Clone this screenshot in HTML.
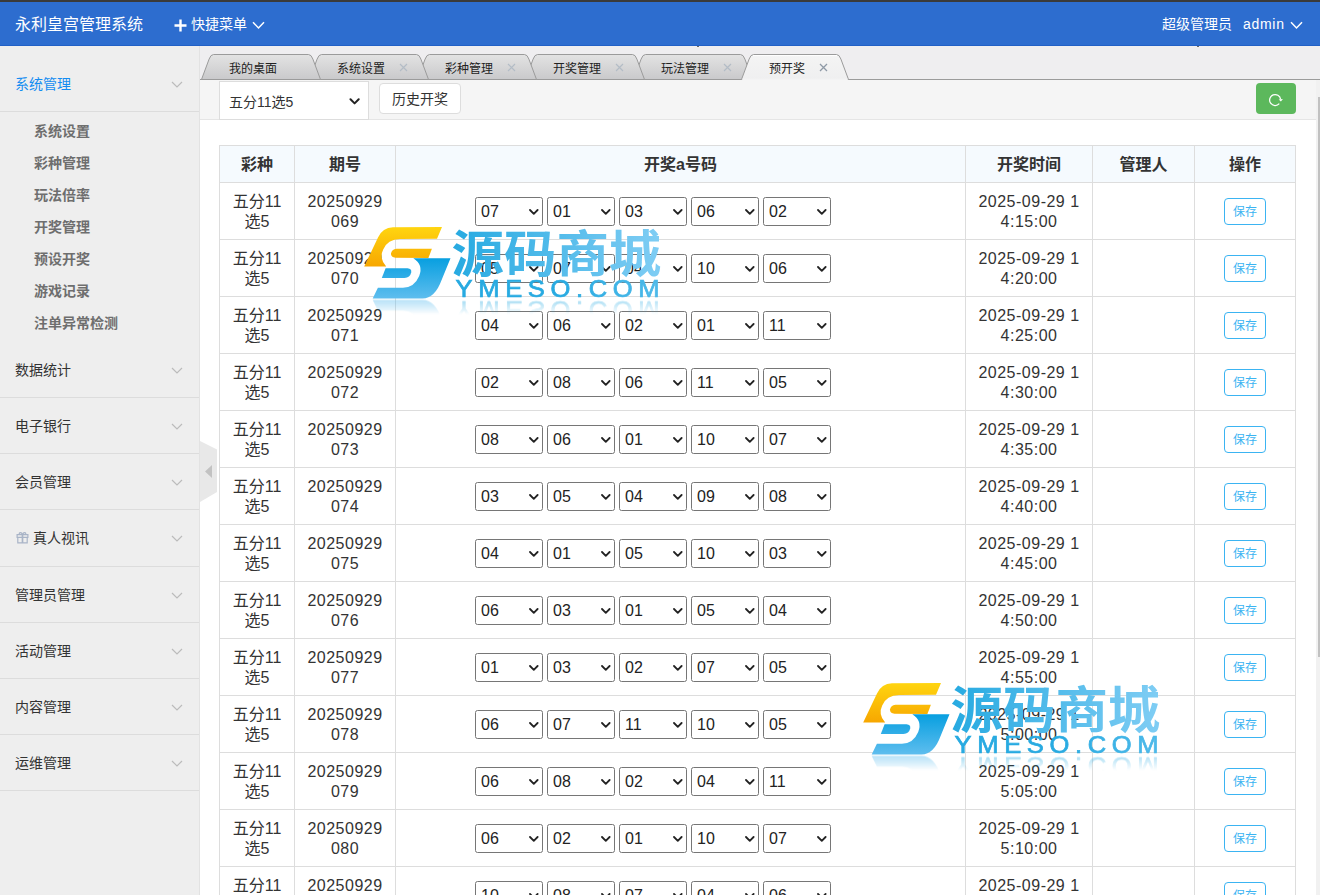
<!DOCTYPE html>
<html lang="zh-CN">
<head>
<meta charset="utf-8">
<title>永利皇宫管理系统</title>
<style>
html,body{margin:0;padding:0}
body{width:1320px;height:895px;overflow:hidden;position:relative;background:#fff;font-family:"Liberation Sans","Noto Sans CJK SC",sans-serif;font-size:14px;color:#333}
.abs{position:absolute}
#topline{left:0;top:0;width:1320px;height:2px;background:#3a3a3a}
#header{left:0;top:2px;width:1320px;height:43px;background:#2d6dcf;border-bottom:1px solid #2160c6;color:#fff}
#header .logo{left:15px;top:0;height:44px;line-height:45px;font-size:16px;white-space:nowrap}
#header .quick{left:191px;top:0;height:44px;line-height:45px;font-size:14px;white-space:nowrap}
#header .role{left:1162px;top:0;height:44px;line-height:45px;font-size:14px;white-space:nowrap}
#header .user{letter-spacing:.7px;left:1243px;top:0;height:44px;line-height:45px;font-size:14px;white-space:nowrap}
#side{left:0;top:46px;width:199px;height:849px;background:#eee;border-right:1px solid #e2e2e2}
.dt{position:absolute;left:0;width:199px;height:55px;border-bottom:1px solid #dcdcdc;line-height:57px;font-size:14px;color:#333}
.dt span.t{position:absolute;left:15px;top:0;white-space:nowrap}
.dt svg{position:absolute;left:171px;top:25px}
.dd{position:absolute;left:34px;font-size:14px;font-weight:bold;color:#6e6e6e;height:32px;line-height:32px;white-space:nowrap}
#tabbar{left:200px;top:46px;width:1120px;height:34px;background:#efeef0}
#tabsvg{left:0;top:46px}
.tabt{position:absolute;top:60px;height:18px;line-height:18px;font-size:12px;color:#222;white-space:nowrap}
.tabx{position:absolute;top:63px}
#toolbar{left:200px;top:80px;width:1116px;height:39px;background:#f5f5f5;border-bottom:1px solid #e5e5e5}
#gsel{left:219px;top:81px;width:148px;height:37px;border:1px solid #ddd;background:#fff;font-size:14px;line-height:40px;color:#333}
#gsel span{position:absolute;left:9px;top:0;white-space:nowrap}
#gsel svg{position:absolute;left:129px;top:16px}
#hist{left:379px;top:83px;width:80px;height:29px;border:1px solid #ddd;border-radius:4px;background:#fff;font-size:14px;line-height:31px;text-align:center;color:#333}
#refresh{left:1256px;top:83px;width:40px;height:31px;border-radius:4px;background:#5cb85c}
#refresh svg{position:absolute;left:11px;top:9px}
#vtrack{left:1316px;top:80px;width:4px;height:815px;background:#f1f1f1}
#vthumb{left:1318px;top:97px;width:2px;height:560px;background:#c1c1c1}
#handle{left:200px;top:441px}
table{position:absolute;left:219px;top:145px;border-collapse:collapse;table-layout:fixed;width:1077px;font-size:16px;line-height:20px;color:#333}
th,td{border:1px solid #ddd;padding:9px 0 7px;text-align:center;vertical-align:middle;overflow:hidden}
th{background:#f5fafe;font-weight:bold;height:20px}
td{height:40px}
td.n{letter-spacing:.5px}
.selwrap{position:relative;top:-.5px;width:356px;margin-left:79px;white-space:nowrap;font-size:0;text-align:left;height:29px}
.sel{display:inline-block;position:relative;box-sizing:border-box;width:68px;height:29px;border:1px solid #767676;border-radius:2.5px;background:#fff;margin-right:4px;font-size:16px;line-height:28.6px;padding-left:5px;text-align:left;vertical-align:top;color:#222}
.sel:last-child{margin-right:0}
.sel .cv{position:absolute;left:52.6px;top:11px}
.save{position:relative;top:-1px;display:inline-block;box-sizing:border-box;width:42px;height:27px;border:1px solid #3bb4f2;border-radius:4px;font-size:12px;line-height:27px;color:#3bb4f2;background:#fff;vertical-align:middle}
.wm{position:absolute;-webkit-box-reflect:below 0.4px linear-gradient(to bottom,rgba(255,255,255,0) 0,rgba(255,255,255,0) 81%,rgba(255,255,255,.45) 100%)}
</style>
</head>
<body>
<div id="topline" class="abs"></div>
<div id="header" class="abs">
  <div class="logo abs">永利皇宫管理系统</div>
  <svg class="abs" style="left:173.5px;top:16.6px" width="13" height="13" viewBox="0 0 13 13"><path d="M6.5 0.5V12.5M0.5 6.5H12.5" stroke="#fff" stroke-width="2.4" fill="none"/></svg>
  <div class="quick abs">快捷菜单</div>
  <svg class="abs" style="left:252px;top:19px" width="13" height="9" viewBox="0 0 13 9"><path d="M1 1.2L6.5 7L12 1.2" stroke="#fff" stroke-width="1.5" fill="none"/></svg>
  <div class="role abs">超级管理员</div>
  <div class="user abs">admin</div>
  <svg class="abs" style="left:1290px;top:19px" width="13" height="9" viewBox="0 0 13 9"><path d="M1 1.2L6.5 7L12 1.2" stroke="#fff" stroke-width="1.5" fill="none"/></svg>
</div>

<div id="side" class="abs">
  <div class="dt" style="top:10px;color:#148cf1"><span class="t">系统管理</span><svg width="12" height="8" viewBox="0 0 12 8"><path d="M1 1L6 6L11 1" stroke="#bbb" stroke-width="1.2" fill="none"/></svg></div>
  <div class="dd" style="top:69px">系统设置</div>
  <div class="dd" style="top:101px">彩种管理</div>
  <div class="dd" style="top:133px">玩法倍率</div>
  <div class="dd" style="top:165px">开奖管理</div>
  <div class="dd" style="top:197px">预设开奖</div>
  <div class="dd" style="top:229px">游戏记录</div>
  <div class="dd" style="top:261px">注单异常检测</div>
  <div class="dt" style="top:296px"><span class="t">数据统计</span><svg width="12" height="8" viewBox="0 0 12 8"><path d="M1 1L6 6L11 1" stroke="#bbb" stroke-width="1.2" fill="none"/></svg></div>
  <div class="dt" style="top:352px"><span class="t">电子银行</span><svg width="12" height="8" viewBox="0 0 12 8"><path d="M1 1L6 6L11 1" stroke="#bbb" stroke-width="1.2" fill="none"/></svg></div>
  <div class="dt" style="top:408px"><span class="t">会员管理</span><svg width="12" height="8" viewBox="0 0 12 8"><path d="M1 1L6 6L11 1" stroke="#bbb" stroke-width="1.2" fill="none"/></svg></div>
  <div class="dt" style="top:464px;height:56px"><span class="t" style="left:33px">真人视讯</span><svg style="left:15.5px;top:21.3px" width="13" height="13" viewBox="0 0 13 13"><path d="M6.5 3.6C5.6 0.8 2.6 1 3.4 3.6M6.5 3.6C7.4 0.8 10.4 1 9.6 3.6" stroke="#a9b4c7" stroke-width="1.2" fill="none"/><path d="M1.1 3.7H11.9V6.4H1.1Z" stroke="#a9b4c7" stroke-width="1.2" fill="none"/><path d="M1.8 6.4V11.9H11.2V6.4" stroke="#a9b4c7" stroke-width="1.2" fill="none"/><path d="M6.5 3.7V11.9" stroke="#a9b4c7" stroke-width="1.7" fill="none"/></svg><svg width="12" height="8" viewBox="0 0 12 8"><path d="M1 1L6 6L11 1" stroke="#bbb" stroke-width="1.2" fill="none"/></svg></div>
  <div class="dt" style="top:521px"><span class="t">管理员管理</span><svg width="12" height="8" viewBox="0 0 12 8"><path d="M1 1L6 6L11 1" stroke="#bbb" stroke-width="1.2" fill="none"/></svg></div>
  <div class="dt" style="top:577px"><span class="t">活动管理</span><svg width="12" height="8" viewBox="0 0 12 8"><path d="M1 1L6 6L11 1" stroke="#bbb" stroke-width="1.2" fill="none"/></svg></div>
  <div class="dt" style="top:633px"><span class="t">内容管理</span><svg width="12" height="8" viewBox="0 0 12 8"><path d="M1 1L6 6L11 1" stroke="#bbb" stroke-width="1.2" fill="none"/></svg></div>
  <div class="dt" style="top:689px"><span class="t">运维管理</span><svg width="12" height="8" viewBox="0 0 12 8"><path d="M1 1L6 6L11 1" stroke="#bbb" stroke-width="1.2" fill="none"/></svg></div>
</div>

<div id="tabbar" class="abs"></div>
<div class="abs" style="left:697px;top:46px;width:2px;height:1px;background:#666"></div>
<div class="abs" style="left:1197px;top:46px;width:2px;height:1px;background:#666"></div>
<div id="toolbar" class="abs"></div>
<svg id="tabsvg" class="abs" width="1320" height="34" viewBox="0 0 1320 34">
  <defs>
    <linearGradient id="tg" x1="0" y1="0" x2="0" y2="1"><stop offset="0" stop-color="#e3e3e3"/><stop offset="1" stop-color="#c9c9cb"/></linearGradient>
    <linearGradient id="ta" x1="0" y1="0" x2="0" y2="1"><stop offset="0" stop-color="#f4f4f4"/><stop offset="1" stop-color="#efeff0"/></linearGradient>
  </defs>
  <path d="M200 33.5H1320" stroke="#9b9b9b" stroke-width="1" fill="none"/>
<path d="M633.5 33.5 L641.1 13.1 Q642.7 8.5 645.5 8.5 L740.5 8.5 Q743.3 8.5 744.9 13.1 L752.5 33.5 Z" fill="url(#tg)" stroke="#9b9b9b" stroke-width="1"/>
<path d="M525.5 33.5 L533.1 13.1 Q534.7 8.5 537.5 8.5 L632.5 8.5 Q635.3 8.5 636.9 13.1 L644.5 33.5 Z" fill="url(#tg)" stroke="#9b9b9b" stroke-width="1"/>
<path d="M417.5 33.5 L425.1 13.1 Q426.7 8.5 429.5 8.5 L524.5 8.5 Q527.3 8.5 528.9 13.1 L536.5 33.5 Z" fill="url(#tg)" stroke="#9b9b9b" stroke-width="1"/>
<path d="M309.5 33.5 L317.1 13.1 Q318.7 8.5 321.5 8.5 L416.5 8.5 Q419.3 8.5 420.9 13.1 L428.5 33.5 Z" fill="url(#tg)" stroke="#9b9b9b" stroke-width="1"/>
<path d="M201.5 33.5 L209.1 13.1 Q210.7 8.5 213.5 8.5 L308.5 8.5 Q311.3 8.5 312.9 13.1 L320.5 33.5 Z" fill="url(#tg)" stroke="#9b9b9b" stroke-width="1"/>
<path d="M741.5 33.5 L749.1 13.1 Q750.7 8.5 753.5 8.5 L836.5 8.5 Q839.3 8.5 840.9 13.1 L848.5 33.5" fill="url(#ta)" stroke="#9b9b9b" stroke-width="1"/>
  <path d="M742.3 33.5H847.7" stroke="#f3f3f4" stroke-width="1.4" fill="none"/>
  <path d="M753 9.6H837" stroke="#fff" stroke-width="1" fill="none"/>
</svg>
<div class="tabt" style="left:229px">我的桌面</div>
<div class="tabt" style="left:337px">系统设置</div>
<div class="tabt" style="left:445px">彩种管理</div>
<div class="tabt" style="left:553px">开奖管理</div>
<div class="tabt" style="left:661px">玩法管理</div>
<div class="tabt" style="left:769px">预开奖</div>
<svg class="tabx" style="left:399px" width="9" height="9" viewBox="0 0 9 9"><path d="M1 1L8 8M8 1L1 8" stroke="#b3bcc6" stroke-width="1.2"/></svg>
<svg class="tabx" style="left:507px" width="9" height="9" viewBox="0 0 9 9"><path d="M1 1L8 8M8 1L1 8" stroke="#b3bcc6" stroke-width="1.2"/></svg>
<svg class="tabx" style="left:615px" width="9" height="9" viewBox="0 0 9 9"><path d="M1 1L8 8M8 1L1 8" stroke="#b3bcc6" stroke-width="1.2"/></svg>
<svg class="tabx" style="left:723px" width="9" height="9" viewBox="0 0 9 9"><path d="M1 1L8 8M8 1L1 8" stroke="#b3bcc6" stroke-width="1.2"/></svg>
<svg class="tabx" style="left:819px" width="9" height="9" viewBox="0 0 9 9"><path d="M1 1L8 8M8 1L1 8" stroke="#8e99a6" stroke-width="1.3"/></svg>

<div id="gsel" class="abs"><span>五分11选5</span><svg width="12" height="8" viewBox="0 0 12 8"><path d="M1.5 1.3L5.6 5.4L9.7 1.3" fill="none" stroke="#222" stroke-width="2" stroke-linecap="round" stroke-linejoin="round"/></svg></div>
<div id="hist" class="abs">历史开奖</div>
<div id="refresh" class="abs"><svg width="16" height="16" viewBox="0 0 16 16"><path d="M12.29 11.68A5.5 5.5 0 1 1 13.6 7.3" fill="none" stroke="#fff" stroke-width="1.25"/><path d="M11.7 7.4L15.9 6.9L13.9 9.6Z" fill="#fff"/></svg></div>

<table>
<colgroup><col style="width:75px"><col style="width:101px"><col style="width:570px"><col style="width:127px"><col style="width:102px"><col style="width:101px"></colgroup>
<thead><tr><th>彩种</th><th>期号</th><th>开奖a号码</th><th>开奖时间</th><th>管理人</th><th>操作</th></tr></thead>
<tbody>
<tr><td>五分11<br>选5</td><td class="n">20250929<br>069</td><td class="nums"><div class="selwrap"><span class="sel">07<svg class="cv" width="10" height="6" viewBox="0 0 10 6"><path d="M1 1 L4.8 4.8 L8.6 1" fill="none" stroke="#222" stroke-width="1.8" stroke-linecap="round" stroke-linejoin="round"/></svg></span><span class="sel">01<svg class="cv" width="10" height="6" viewBox="0 0 10 6"><path d="M1 1 L4.8 4.8 L8.6 1" fill="none" stroke="#222" stroke-width="1.8" stroke-linecap="round" stroke-linejoin="round"/></svg></span><span class="sel">03<svg class="cv" width="10" height="6" viewBox="0 0 10 6"><path d="M1 1 L4.8 4.8 L8.6 1" fill="none" stroke="#222" stroke-width="1.8" stroke-linecap="round" stroke-linejoin="round"/></svg></span><span class="sel">06<svg class="cv" width="10" height="6" viewBox="0 0 10 6"><path d="M1 1 L4.8 4.8 L8.6 1" fill="none" stroke="#222" stroke-width="1.8" stroke-linecap="round" stroke-linejoin="round"/></svg></span><span class="sel">02<svg class="cv" width="10" height="6" viewBox="0 0 10 6"><path d="M1 1 L4.8 4.8 L8.6 1" fill="none" stroke="#222" stroke-width="1.8" stroke-linecap="round" stroke-linejoin="round"/></svg></span></div></td><td class="n">2025-09-29 1<br>4:15:00</td><td></td><td><span class="save">保存</span></td></tr>
<tr><td>五分11<br>选5</td><td class="n">20250929<br>070</td><td class="nums"><div class="selwrap"><span class="sel">05<svg class="cv" width="10" height="6" viewBox="0 0 10 6"><path d="M1 1 L4.8 4.8 L8.6 1" fill="none" stroke="#222" stroke-width="1.8" stroke-linecap="round" stroke-linejoin="round"/></svg></span><span class="sel">07<svg class="cv" width="10" height="6" viewBox="0 0 10 6"><path d="M1 1 L4.8 4.8 L8.6 1" fill="none" stroke="#222" stroke-width="1.8" stroke-linecap="round" stroke-linejoin="round"/></svg></span><span class="sel">04<svg class="cv" width="10" height="6" viewBox="0 0 10 6"><path d="M1 1 L4.8 4.8 L8.6 1" fill="none" stroke="#222" stroke-width="1.8" stroke-linecap="round" stroke-linejoin="round"/></svg></span><span class="sel">10<svg class="cv" width="10" height="6" viewBox="0 0 10 6"><path d="M1 1 L4.8 4.8 L8.6 1" fill="none" stroke="#222" stroke-width="1.8" stroke-linecap="round" stroke-linejoin="round"/></svg></span><span class="sel">06<svg class="cv" width="10" height="6" viewBox="0 0 10 6"><path d="M1 1 L4.8 4.8 L8.6 1" fill="none" stroke="#222" stroke-width="1.8" stroke-linecap="round" stroke-linejoin="round"/></svg></span></div></td><td class="n">2025-09-29 1<br>4:20:00</td><td></td><td><span class="save">保存</span></td></tr>
<tr><td>五分11<br>选5</td><td class="n">20250929<br>071</td><td class="nums"><div class="selwrap"><span class="sel">04<svg class="cv" width="10" height="6" viewBox="0 0 10 6"><path d="M1 1 L4.8 4.8 L8.6 1" fill="none" stroke="#222" stroke-width="1.8" stroke-linecap="round" stroke-linejoin="round"/></svg></span><span class="sel">06<svg class="cv" width="10" height="6" viewBox="0 0 10 6"><path d="M1 1 L4.8 4.8 L8.6 1" fill="none" stroke="#222" stroke-width="1.8" stroke-linecap="round" stroke-linejoin="round"/></svg></span><span class="sel">02<svg class="cv" width="10" height="6" viewBox="0 0 10 6"><path d="M1 1 L4.8 4.8 L8.6 1" fill="none" stroke="#222" stroke-width="1.8" stroke-linecap="round" stroke-linejoin="round"/></svg></span><span class="sel">01<svg class="cv" width="10" height="6" viewBox="0 0 10 6"><path d="M1 1 L4.8 4.8 L8.6 1" fill="none" stroke="#222" stroke-width="1.8" stroke-linecap="round" stroke-linejoin="round"/></svg></span><span class="sel">11<svg class="cv" width="10" height="6" viewBox="0 0 10 6"><path d="M1 1 L4.8 4.8 L8.6 1" fill="none" stroke="#222" stroke-width="1.8" stroke-linecap="round" stroke-linejoin="round"/></svg></span></div></td><td class="n">2025-09-29 1<br>4:25:00</td><td></td><td><span class="save">保存</span></td></tr>
<tr><td>五分11<br>选5</td><td class="n">20250929<br>072</td><td class="nums"><div class="selwrap"><span class="sel">02<svg class="cv" width="10" height="6" viewBox="0 0 10 6"><path d="M1 1 L4.8 4.8 L8.6 1" fill="none" stroke="#222" stroke-width="1.8" stroke-linecap="round" stroke-linejoin="round"/></svg></span><span class="sel">08<svg class="cv" width="10" height="6" viewBox="0 0 10 6"><path d="M1 1 L4.8 4.8 L8.6 1" fill="none" stroke="#222" stroke-width="1.8" stroke-linecap="round" stroke-linejoin="round"/></svg></span><span class="sel">06<svg class="cv" width="10" height="6" viewBox="0 0 10 6"><path d="M1 1 L4.8 4.8 L8.6 1" fill="none" stroke="#222" stroke-width="1.8" stroke-linecap="round" stroke-linejoin="round"/></svg></span><span class="sel">11<svg class="cv" width="10" height="6" viewBox="0 0 10 6"><path d="M1 1 L4.8 4.8 L8.6 1" fill="none" stroke="#222" stroke-width="1.8" stroke-linecap="round" stroke-linejoin="round"/></svg></span><span class="sel">05<svg class="cv" width="10" height="6" viewBox="0 0 10 6"><path d="M1 1 L4.8 4.8 L8.6 1" fill="none" stroke="#222" stroke-width="1.8" stroke-linecap="round" stroke-linejoin="round"/></svg></span></div></td><td class="n">2025-09-29 1<br>4:30:00</td><td></td><td><span class="save">保存</span></td></tr>
<tr><td>五分11<br>选5</td><td class="n">20250929<br>073</td><td class="nums"><div class="selwrap"><span class="sel">08<svg class="cv" width="10" height="6" viewBox="0 0 10 6"><path d="M1 1 L4.8 4.8 L8.6 1" fill="none" stroke="#222" stroke-width="1.8" stroke-linecap="round" stroke-linejoin="round"/></svg></span><span class="sel">06<svg class="cv" width="10" height="6" viewBox="0 0 10 6"><path d="M1 1 L4.8 4.8 L8.6 1" fill="none" stroke="#222" stroke-width="1.8" stroke-linecap="round" stroke-linejoin="round"/></svg></span><span class="sel">01<svg class="cv" width="10" height="6" viewBox="0 0 10 6"><path d="M1 1 L4.8 4.8 L8.6 1" fill="none" stroke="#222" stroke-width="1.8" stroke-linecap="round" stroke-linejoin="round"/></svg></span><span class="sel">10<svg class="cv" width="10" height="6" viewBox="0 0 10 6"><path d="M1 1 L4.8 4.8 L8.6 1" fill="none" stroke="#222" stroke-width="1.8" stroke-linecap="round" stroke-linejoin="round"/></svg></span><span class="sel">07<svg class="cv" width="10" height="6" viewBox="0 0 10 6"><path d="M1 1 L4.8 4.8 L8.6 1" fill="none" stroke="#222" stroke-width="1.8" stroke-linecap="round" stroke-linejoin="round"/></svg></span></div></td><td class="n">2025-09-29 1<br>4:35:00</td><td></td><td><span class="save">保存</span></td></tr>
<tr><td>五分11<br>选5</td><td class="n">20250929<br>074</td><td class="nums"><div class="selwrap"><span class="sel">03<svg class="cv" width="10" height="6" viewBox="0 0 10 6"><path d="M1 1 L4.8 4.8 L8.6 1" fill="none" stroke="#222" stroke-width="1.8" stroke-linecap="round" stroke-linejoin="round"/></svg></span><span class="sel">05<svg class="cv" width="10" height="6" viewBox="0 0 10 6"><path d="M1 1 L4.8 4.8 L8.6 1" fill="none" stroke="#222" stroke-width="1.8" stroke-linecap="round" stroke-linejoin="round"/></svg></span><span class="sel">04<svg class="cv" width="10" height="6" viewBox="0 0 10 6"><path d="M1 1 L4.8 4.8 L8.6 1" fill="none" stroke="#222" stroke-width="1.8" stroke-linecap="round" stroke-linejoin="round"/></svg></span><span class="sel">09<svg class="cv" width="10" height="6" viewBox="0 0 10 6"><path d="M1 1 L4.8 4.8 L8.6 1" fill="none" stroke="#222" stroke-width="1.8" stroke-linecap="round" stroke-linejoin="round"/></svg></span><span class="sel">08<svg class="cv" width="10" height="6" viewBox="0 0 10 6"><path d="M1 1 L4.8 4.8 L8.6 1" fill="none" stroke="#222" stroke-width="1.8" stroke-linecap="round" stroke-linejoin="round"/></svg></span></div></td><td class="n">2025-09-29 1<br>4:40:00</td><td></td><td><span class="save">保存</span></td></tr>
<tr><td>五分11<br>选5</td><td class="n">20250929<br>075</td><td class="nums"><div class="selwrap"><span class="sel">04<svg class="cv" width="10" height="6" viewBox="0 0 10 6"><path d="M1 1 L4.8 4.8 L8.6 1" fill="none" stroke="#222" stroke-width="1.8" stroke-linecap="round" stroke-linejoin="round"/></svg></span><span class="sel">01<svg class="cv" width="10" height="6" viewBox="0 0 10 6"><path d="M1 1 L4.8 4.8 L8.6 1" fill="none" stroke="#222" stroke-width="1.8" stroke-linecap="round" stroke-linejoin="round"/></svg></span><span class="sel">05<svg class="cv" width="10" height="6" viewBox="0 0 10 6"><path d="M1 1 L4.8 4.8 L8.6 1" fill="none" stroke="#222" stroke-width="1.8" stroke-linecap="round" stroke-linejoin="round"/></svg></span><span class="sel">10<svg class="cv" width="10" height="6" viewBox="0 0 10 6"><path d="M1 1 L4.8 4.8 L8.6 1" fill="none" stroke="#222" stroke-width="1.8" stroke-linecap="round" stroke-linejoin="round"/></svg></span><span class="sel">03<svg class="cv" width="10" height="6" viewBox="0 0 10 6"><path d="M1 1 L4.8 4.8 L8.6 1" fill="none" stroke="#222" stroke-width="1.8" stroke-linecap="round" stroke-linejoin="round"/></svg></span></div></td><td class="n">2025-09-29 1<br>4:45:00</td><td></td><td><span class="save">保存</span></td></tr>
<tr><td>五分11<br>选5</td><td class="n">20250929<br>076</td><td class="nums"><div class="selwrap"><span class="sel">06<svg class="cv" width="10" height="6" viewBox="0 0 10 6"><path d="M1 1 L4.8 4.8 L8.6 1" fill="none" stroke="#222" stroke-width="1.8" stroke-linecap="round" stroke-linejoin="round"/></svg></span><span class="sel">03<svg class="cv" width="10" height="6" viewBox="0 0 10 6"><path d="M1 1 L4.8 4.8 L8.6 1" fill="none" stroke="#222" stroke-width="1.8" stroke-linecap="round" stroke-linejoin="round"/></svg></span><span class="sel">01<svg class="cv" width="10" height="6" viewBox="0 0 10 6"><path d="M1 1 L4.8 4.8 L8.6 1" fill="none" stroke="#222" stroke-width="1.8" stroke-linecap="round" stroke-linejoin="round"/></svg></span><span class="sel">05<svg class="cv" width="10" height="6" viewBox="0 0 10 6"><path d="M1 1 L4.8 4.8 L8.6 1" fill="none" stroke="#222" stroke-width="1.8" stroke-linecap="round" stroke-linejoin="round"/></svg></span><span class="sel">04<svg class="cv" width="10" height="6" viewBox="0 0 10 6"><path d="M1 1 L4.8 4.8 L8.6 1" fill="none" stroke="#222" stroke-width="1.8" stroke-linecap="round" stroke-linejoin="round"/></svg></span></div></td><td class="n">2025-09-29 1<br>4:50:00</td><td></td><td><span class="save">保存</span></td></tr>
<tr><td>五分11<br>选5</td><td class="n">20250929<br>077</td><td class="nums"><div class="selwrap"><span class="sel">01<svg class="cv" width="10" height="6" viewBox="0 0 10 6"><path d="M1 1 L4.8 4.8 L8.6 1" fill="none" stroke="#222" stroke-width="1.8" stroke-linecap="round" stroke-linejoin="round"/></svg></span><span class="sel">03<svg class="cv" width="10" height="6" viewBox="0 0 10 6"><path d="M1 1 L4.8 4.8 L8.6 1" fill="none" stroke="#222" stroke-width="1.8" stroke-linecap="round" stroke-linejoin="round"/></svg></span><span class="sel">02<svg class="cv" width="10" height="6" viewBox="0 0 10 6"><path d="M1 1 L4.8 4.8 L8.6 1" fill="none" stroke="#222" stroke-width="1.8" stroke-linecap="round" stroke-linejoin="round"/></svg></span><span class="sel">07<svg class="cv" width="10" height="6" viewBox="0 0 10 6"><path d="M1 1 L4.8 4.8 L8.6 1" fill="none" stroke="#222" stroke-width="1.8" stroke-linecap="round" stroke-linejoin="round"/></svg></span><span class="sel">05<svg class="cv" width="10" height="6" viewBox="0 0 10 6"><path d="M1 1 L4.8 4.8 L8.6 1" fill="none" stroke="#222" stroke-width="1.8" stroke-linecap="round" stroke-linejoin="round"/></svg></span></div></td><td class="n">2025-09-29 1<br>4:55:00</td><td></td><td><span class="save">保存</span></td></tr>
<tr><td>五分11<br>选5</td><td class="n">20250929<br>078</td><td class="nums"><div class="selwrap"><span class="sel">06<svg class="cv" width="10" height="6" viewBox="0 0 10 6"><path d="M1 1 L4.8 4.8 L8.6 1" fill="none" stroke="#222" stroke-width="1.8" stroke-linecap="round" stroke-linejoin="round"/></svg></span><span class="sel">07<svg class="cv" width="10" height="6" viewBox="0 0 10 6"><path d="M1 1 L4.8 4.8 L8.6 1" fill="none" stroke="#222" stroke-width="1.8" stroke-linecap="round" stroke-linejoin="round"/></svg></span><span class="sel">11<svg class="cv" width="10" height="6" viewBox="0 0 10 6"><path d="M1 1 L4.8 4.8 L8.6 1" fill="none" stroke="#222" stroke-width="1.8" stroke-linecap="round" stroke-linejoin="round"/></svg></span><span class="sel">10<svg class="cv" width="10" height="6" viewBox="0 0 10 6"><path d="M1 1 L4.8 4.8 L8.6 1" fill="none" stroke="#222" stroke-width="1.8" stroke-linecap="round" stroke-linejoin="round"/></svg></span><span class="sel">05<svg class="cv" width="10" height="6" viewBox="0 0 10 6"><path d="M1 1 L4.8 4.8 L8.6 1" fill="none" stroke="#222" stroke-width="1.8" stroke-linecap="round" stroke-linejoin="round"/></svg></span></div></td><td class="n">2025-09-29 1<br>5:00:00</td><td></td><td><span class="save">保存</span></td></tr>
<tr><td>五分11<br>选5</td><td class="n">20250929<br>079</td><td class="nums"><div class="selwrap"><span class="sel">06<svg class="cv" width="10" height="6" viewBox="0 0 10 6"><path d="M1 1 L4.8 4.8 L8.6 1" fill="none" stroke="#222" stroke-width="1.8" stroke-linecap="round" stroke-linejoin="round"/></svg></span><span class="sel">08<svg class="cv" width="10" height="6" viewBox="0 0 10 6"><path d="M1 1 L4.8 4.8 L8.6 1" fill="none" stroke="#222" stroke-width="1.8" stroke-linecap="round" stroke-linejoin="round"/></svg></span><span class="sel">02<svg class="cv" width="10" height="6" viewBox="0 0 10 6"><path d="M1 1 L4.8 4.8 L8.6 1" fill="none" stroke="#222" stroke-width="1.8" stroke-linecap="round" stroke-linejoin="round"/></svg></span><span class="sel">04<svg class="cv" width="10" height="6" viewBox="0 0 10 6"><path d="M1 1 L4.8 4.8 L8.6 1" fill="none" stroke="#222" stroke-width="1.8" stroke-linecap="round" stroke-linejoin="round"/></svg></span><span class="sel">11<svg class="cv" width="10" height="6" viewBox="0 0 10 6"><path d="M1 1 L4.8 4.8 L8.6 1" fill="none" stroke="#222" stroke-width="1.8" stroke-linecap="round" stroke-linejoin="round"/></svg></span></div></td><td class="n">2025-09-29 1<br>5:05:00</td><td></td><td><span class="save">保存</span></td></tr>
<tr><td>五分11<br>选5</td><td class="n">20250929<br>080</td><td class="nums"><div class="selwrap"><span class="sel">06<svg class="cv" width="10" height="6" viewBox="0 0 10 6"><path d="M1 1 L4.8 4.8 L8.6 1" fill="none" stroke="#222" stroke-width="1.8" stroke-linecap="round" stroke-linejoin="round"/></svg></span><span class="sel">02<svg class="cv" width="10" height="6" viewBox="0 0 10 6"><path d="M1 1 L4.8 4.8 L8.6 1" fill="none" stroke="#222" stroke-width="1.8" stroke-linecap="round" stroke-linejoin="round"/></svg></span><span class="sel">01<svg class="cv" width="10" height="6" viewBox="0 0 10 6"><path d="M1 1 L4.8 4.8 L8.6 1" fill="none" stroke="#222" stroke-width="1.8" stroke-linecap="round" stroke-linejoin="round"/></svg></span><span class="sel">10<svg class="cv" width="10" height="6" viewBox="0 0 10 6"><path d="M1 1 L4.8 4.8 L8.6 1" fill="none" stroke="#222" stroke-width="1.8" stroke-linecap="round" stroke-linejoin="round"/></svg></span><span class="sel">07<svg class="cv" width="10" height="6" viewBox="0 0 10 6"><path d="M1 1 L4.8 4.8 L8.6 1" fill="none" stroke="#222" stroke-width="1.8" stroke-linecap="round" stroke-linejoin="round"/></svg></span></div></td><td class="n">2025-09-29 1<br>5:10:00</td><td></td><td><span class="save">保存</span></td></tr>
<tr><td>五分11<br>选5</td><td class="n">20250929<br>081</td><td class="nums"><div class="selwrap"><span class="sel">10<svg class="cv" width="10" height="6" viewBox="0 0 10 6"><path d="M1 1 L4.8 4.8 L8.6 1" fill="none" stroke="#222" stroke-width="1.8" stroke-linecap="round" stroke-linejoin="round"/></svg></span><span class="sel">08<svg class="cv" width="10" height="6" viewBox="0 0 10 6"><path d="M1 1 L4.8 4.8 L8.6 1" fill="none" stroke="#222" stroke-width="1.8" stroke-linecap="round" stroke-linejoin="round"/></svg></span><span class="sel">07<svg class="cv" width="10" height="6" viewBox="0 0 10 6"><path d="M1 1 L4.8 4.8 L8.6 1" fill="none" stroke="#222" stroke-width="1.8" stroke-linecap="round" stroke-linejoin="round"/></svg></span><span class="sel">04<svg class="cv" width="10" height="6" viewBox="0 0 10 6"><path d="M1 1 L4.8 4.8 L8.6 1" fill="none" stroke="#222" stroke-width="1.8" stroke-linecap="round" stroke-linejoin="round"/></svg></span><span class="sel">06<svg class="cv" width="10" height="6" viewBox="0 0 10 6"><path d="M1 1 L4.8 4.8 L8.6 1" fill="none" stroke="#222" stroke-width="1.8" stroke-linecap="round" stroke-linejoin="round"/></svg></span></div></td><td class="n">2025-09-29 1<br>5:15:00</td><td></td><td><span class="save">保存</span></td></tr>

</tbody>
</table>

<svg id="handle" class="abs" width="18" height="62" viewBox="0 0 18 62"><path d="M0 0L17 8.5V51L0 61Z" fill="#e8e8e8"/><path d="M12 24V37L5 30.5Z" fill="#c2c2c2"/></svg>
<div id="vtrack" class="abs"></div>
<div id="vthumb" class="abs"></div>

<svg class="wm" style="left:360px;top:220px" width="310" height="79" viewBox="0 0 310 79">
  <defs>
    <linearGradient id="ay" gradientUnits="userSpaceOnUse" x1="0" y1="5" x2="0" y2="45"><stop offset="0" stop-color="#ffd510"/><stop offset="1" stop-color="#f7a600"/></linearGradient>
    <linearGradient id="ab" gradientUnits="userSpaceOnUse" x1="0" y1="36" x2="0" y2="76"><stop offset="0" stop-color="#079fe0"/><stop offset="1" stop-color="#5dbdee"/></linearGradient>
    <linearGradient id="at" gradientUnits="userSpaceOnUse" x1="93" y1="0" x2="300" y2="0"><stop offset="0" stop-color="#27aae1"/><stop offset="1" stop-color="#7fcdf4"/></linearGradient>
  </defs>
  <g transform="translate(5,2)">
    <path d="M77 5L28 5.3Q17.5 5.6 13 15.5L-0.8 44.6L21.2 44.6Q13.8 36.5 18.2 27.5Q22.5 17.2 35 17L72 16.7Z" fill="url(#ay)"/>
    <path d="M66.9 26.7L31.5 26.7Q26.6 27.2 26 31.6Q25.9 35.6 30.5 35.8L63.4 36.1Z" fill="url(#ay)"/>
    <path d="M48.3 36.2L85.5 36.2L76.6 58Q70 76.2 57.5 76.6L7.7 76.6L12.9 65.8L38 65.8Q49.5 65.4 54.2 54Q58.6 42.5 48.3 36.2Z" fill="url(#ab)"/>
    <path d="M20.6 46.3L42.5 46.3Q47 46.6 46.2 50.6Q45 55.7 39.5 56L16.8 56Z" fill="url(#ab)"/>
  </g>
  <text x="91.6" y="51.6" font-family="'Liberation Sans','Noto Sans CJK SC',sans-serif" font-weight="700" font-size="49.6" textLength="209.6" lengthAdjust="spacingAndGlyphs" fill="url(#at)">源码商城</text>
  <text transform="translate(95.6,77.2) scale(1.1,1)" x="0" y="0" font-family="'Liberation Sans',sans-serif" font-size="23.2" textLength="185.4" lengthAdjust="spacing" fill="url(#at)" stroke="url(#at)" stroke-width="0.7">YMESO.COM</text>
</svg>
<svg class="wm" style="left:859px;top:676px" width="310" height="79" viewBox="0 0 310 79">
  <defs>
    <linearGradient id="by" gradientUnits="userSpaceOnUse" x1="0" y1="5" x2="0" y2="45"><stop offset="0" stop-color="#ffd510"/><stop offset="1" stop-color="#f7a600"/></linearGradient>
    <linearGradient id="bb" gradientUnits="userSpaceOnUse" x1="0" y1="36" x2="0" y2="76"><stop offset="0" stop-color="#079fe0"/><stop offset="1" stop-color="#5dbdee"/></linearGradient>
    <linearGradient id="bt" gradientUnits="userSpaceOnUse" x1="93" y1="0" x2="300" y2="0"><stop offset="0" stop-color="#27aae1"/><stop offset="1" stop-color="#7fcdf4"/></linearGradient>
  </defs>
  <g transform="translate(5,2)">
    <path d="M77 5L28 5.3Q17.5 5.6 13 15.5L-0.8 44.6L21.2 44.6Q13.8 36.5 18.2 27.5Q22.5 17.2 35 17L72 16.7Z" fill="url(#by)"/>
    <path d="M66.9 26.7L31.5 26.7Q26.6 27.2 26 31.6Q25.9 35.6 30.5 35.8L63.4 36.1Z" fill="url(#by)"/>
    <path d="M48.3 36.2L85.5 36.2L76.6 58Q70 76.2 57.5 76.6L7.7 76.6L12.9 65.8L38 65.8Q49.5 65.4 54.2 54Q58.6 42.5 48.3 36.2Z" fill="url(#bb)"/>
    <path d="M20.6 46.3L42.5 46.3Q47 46.6 46.2 50.6Q45 55.7 39.5 56L16.8 56Z" fill="url(#bb)"/>
  </g>
  <text x="91.6" y="51.6" font-family="'Liberation Sans','Noto Sans CJK SC',sans-serif" font-weight="700" font-size="49.6" textLength="209.6" lengthAdjust="spacingAndGlyphs" fill="url(#bt)">源码商城</text>
  <text transform="translate(95.6,77.2) scale(1.1,1)" x="0" y="0" font-family="'Liberation Sans',sans-serif" font-size="23.2" textLength="185.4" lengthAdjust="spacing" fill="url(#bt)" stroke="url(#bt)" stroke-width="0.7">YMESO.COM</text>
</svg>

</body>
</html>
